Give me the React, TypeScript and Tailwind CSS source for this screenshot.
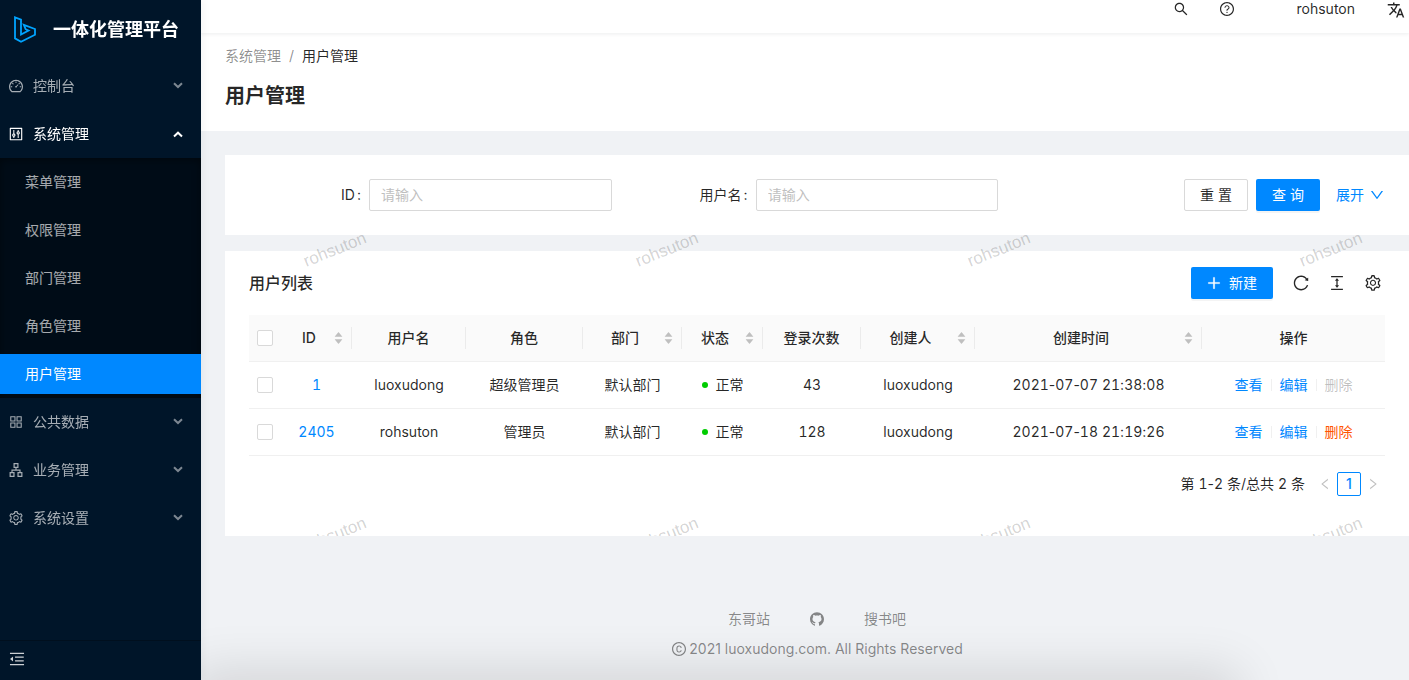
import React from 'react';
import {
  AiFillCaretDown,
  AiFillCaretUp,
  AiOutlineApartment,
  AiOutlineAppstore,
  AiOutlineColumnHeight,
  AiOutlineControl,
  AiOutlineCopyright,
  AiOutlineDashboard,
  AiOutlineDown,
  AiOutlineGithub,
  AiOutlineLeft,
  AiOutlineMenuFold,
  AiOutlinePlus,
  AiOutlineQuestionCircle,
  AiOutlineReload,
  AiOutlineRight,
  AiOutlineSearch,
  AiOutlineSetting,
} from 'react-icons/ai';
import { MdTranslate } from 'react-icons/md';

const subMenus = ['菜单管理', '权限管理', '部门管理', '角色管理', '用户管理'];

const columns = [
  { title: 'ID', width: 71, sorter: true },
  { title: '用户名', width: 114 },
  { title: '角色', width: 117 },
  { title: '部门', width: 99, sorter: true },
  { title: '状态', width: 81, sorter: true },
  { title: '登录次数', width: 98 },
  { title: '创建人', width: 114, sorter: true },
  { title: '创建时间', width: 227, sorter: true },
  { title: '操作', width: 183 },
];

const users = [
  { id: 1, name: 'luoxudong', role: '超级管理员', dept: '默认部门', status: '正常', logins: 43, creator: 'luoxudong', createdAt: '2021-07-07 21:38:08', removable: false },
  { id: 2405, name: 'rohsuton', role: '管理员', dept: '默认部门', status: '正常', logins: 128, creator: 'luoxudong', createdAt: '2021-07-18 21:19:26', removable: true },
];

const Logo: React.FC = () => (
  <svg width="24" height="28" viewBox="0 0 24 28" fill="none" stroke="#00a4ff" strokeWidth="1.8" strokeLinejoin="miter">
    <path d="M2 1.4 L8 3.6 V18.6 L15.6 14.6 L12.6 13.2 L10.8 8.8 L22 13 V18.8 L8 25.8 L2 22.4 Z" />
  </svg>
);

type MenuItemProps = { icon: React.ReactNode; label: string; open?: boolean };

const MenuItem: React.FC<MenuItemProps> = ({ icon, label, open }) => (
  <button
    type="button"
    aria-expanded={!!open}
    className={`my-1 flex h-10 w-full items-center pl-2 pr-[18px] ${open ? 'text-white' : 'text-white/65'}`}
  >
    <span className="text-base">{icon}</span>
    <span className="ml-[9px] flex-1 text-left">{label}</span>
    <svg
      width="10"
      height="8"
      viewBox="0 0 10 8"
      fill="none"
      stroke="currentColor"
      strokeWidth="2"
      className={open ? '' : 'opacity-75'}
    >
      {open ? <path d="M1 6.5 L5 2.7 L9 6.5" /> : <path d="M1 1.2 L5 5 L9 1.2" />}
    </svg>
  </button>
);

const Sidebar: React.FC = () => (
  <aside className="z-10 flex w-[201px] shrink-0 flex-col bg-[#001529] shadow-[2px_0_8px_0_rgba(29,35,41,0.05)]">
    <div className="flex h-[62px] items-center pb-0.5 pl-[13px]">
      <Logo />
      <h1 className="ml-4 text-lg font-semibold text-white">一体化管理平台</h1>
    </div>
    <nav className="flex flex-1 flex-col">
      <MenuItem icon={<AiOutlineDashboard />} label="控制台" />
      <MenuItem icon={<AiOutlineControl />} label="系统管理" open />
      <ul className="bg-[#000c17] shadow-[inset_0_2px_8px_rgba(0,0,0,0.45)]">
        {subMenus.map((name) => (
          <li key={name} className="flex py-1">
            <a
              href="#"
              className={`flex h-10 w-full items-center pl-[25px] ${
                name === '用户管理' ? 'bg-[#0088ff] text-white' : 'text-white/65'
              }`}
            >
              {name}
            </a>
          </li>
        ))}
      </ul>
      <MenuItem icon={<AiOutlineAppstore />} label="公共数据" />
      <MenuItem icon={<AiOutlineApartment />} label="业务管理" />
      <MenuItem icon={<AiOutlineSetting />} label="系统设置" />
    </nav>
    <button type="button" aria-label="收起菜单" className="flex h-10 items-center border-t border-black/25 pb-1 pl-2 text-lg text-white/80">
      <AiOutlineMenuFold />
    </button>
  </aside>
);

const Header: React.FC = () => (
  <header className="z-[1] flex h-[33px] items-start justify-end bg-white pr-1 shadow-[0_1px_4px_rgba(0,21,41,0.08)]">
    <button type="button" aria-label="搜索" className="mt-px mr-[30px] text-base">
      <AiOutlineSearch />
    </button>
    <a href="#" aria-label="帮助" className="mt-px mr-[62px] text-base">
      <AiOutlineQuestionCircle />
    </a>
    <span className="mr-8 leading-[18px]">rohsuton</span>
    <button type="button" aria-label="语言" className="mt-px text-lg">
      <MdTranslate />
    </button>
  </header>
);

const Field: React.FC<{ id: string; label: string }> = ({ id, label }) => (
  <div className="flex items-center">
    <label htmlFor={id} className="w-[120px] shrink-0 pr-2 text-right">
      {label}
      <span className="ml-0.5">:</span>
    </label>
    <input
      id={id}
      type="text"
      placeholder="请输入"
      className="h-8 w-full min-w-0 rounded-xs border border-[#d9d9d9] bg-white px-[11px] pb-0.5 placeholder:text-[#bfbfbf]"
    />
  </div>
);

const SearchForm: React.FC = () => (
  <form className="grid grid-cols-3 gap-6 bg-white p-6">
    <Field id="search-id" label="ID" />
    <Field id="search-name" label="用户名" />
    <div className="flex items-center justify-end gap-2">
      <button type="reset" className="h-8 w-16 rounded-xs border border-[#d9d9d9]">
        重 置
      </button>
      <button type="button" className="h-8 w-16 rounded-xs bg-[#0088ff] text-white shadow-[0_2px_0_rgba(0,0,0,0.045)]">
        查 询
      </button>
      <a href="#" className="ml-2 flex items-center gap-[5px] text-[#0088ff]">
        展开
        <AiOutlineDown className="text-base" />
      </a>
    </div>
  </form>
);

const Sorter: React.FC = () => (
  <span className="flex flex-col text-[11px] text-[#bfbfbf]">
    <AiFillCaretUp />
    <AiFillCaretDown className="-mt-1" />
  </span>
);

const Check: React.FC<{ label: string }> = ({ label }) => (
  <input
    type="checkbox"
    aria-label={label}
    className="block size-4 appearance-none rounded-xs border border-[#d9d9d9] bg-white checked:bg-[#0088ff]"
  />
);

// equal-width digits, while the separators between them keep their own width
const Digits: React.FC<{ text: string }> = ({ text }) => (
  <>
    {text.split(/(\d+)/).map((part, i) => (
      <span key={i} className={i % 2 ? 'tabular-nums' : ''}>
        {part}
      </span>
    ))}
  </>
);

const UserTable: React.FC = () => (
  <table className="w-full table-fixed border-collapse text-center">
    <colgroup>
      <col style={{ width: 32 }} />
      {columns.map((c) => (
        <col key={c.title} style={{ width: c.width }} />
      ))}
    </colgroup>
    <thead>
      <tr className="h-[46px] border-b border-[#f0f0f0] bg-[#fafafa]">
        <th className="p-0 pl-2">
          <Check label="全选" />
        </th>
        {columns.map((c, i) => (
          <th key={c.title} className="p-0 font-medium">
            <div className={`flex h-[22px] items-center ${i < columns.length - 1 ? 'border-r border-black/6' : ''}`}>
              <span className={`flex-1 ${c.sorter ? 'pl-1' : ''}`}>{c.title}</span>
              {c.sorter && (
                <span className="pr-[7px]">
                  <Sorter />
                </span>
              )}
            </div>
          </th>
        ))}
      </tr>
    </thead>
    <tbody>
      {users.map((u) => (
        <tr key={u.id} className="h-[47px] border-b border-[#f0f0f0]">
          <td className="p-0 pl-2">
            <Check label={`选择 ${u.name}`} />
          </td>
          <td className="tabular-nums">
            <a href="#" className="text-[#0088ff]">{u.id}</a>
          </td>
          <td>{u.name}</td>
          <td>{u.role}</td>
          <td>{u.dept}</td>
          <td>
            <div className="flex items-center justify-center gap-2">
              <span className="size-1.5 rounded-full bg-[#00cc00]" />
              {u.status}
            </div>
          </td>
          <td className="tabular-nums">{u.logins}</td>
          <td>{u.creator}</td>
          <td>
            <Digits text={u.createdAt} />
          </td>
          <td>
            <div className="flex items-center justify-center gap-2">
              <a href="#" className="text-[#0088ff]">查看</a>
              <span className="h-3 w-px bg-black/6" />
              <a href="#" className="text-[#0088ff]">编辑</a>
              <span className="h-3 w-px bg-black/6" />
              <button type="button" disabled={!u.removable} className="text-[#ff5500] disabled:text-black/25">
                删除
              </button>
            </div>
          </td>
        </tr>
      ))}
    </tbody>
  </table>
);

const Pagination: React.FC = () => (
  <div className="mt-4 flex items-center justify-end">
    <span className="mr-2">
      <Digits text="第 1-2 条/总共 2 条" />
    </span>
    <button type="button" disabled aria-label="上一页" className="flex size-6 items-center justify-center text-sm text-black/25">
      <AiOutlineLeft />
    </button>
    <button type="button" className="size-6 rounded-xs border border-[#0088ff] font-medium text-[#0088ff]">
      1
    </button>
    <button type="button" disabled aria-label="下一页" className="flex size-6 items-center justify-center text-sm text-black/25">
      <AiOutlineRight />
    </button>
  </div>
);

const Watermark: React.FC = () => (
  <div aria-hidden="true" className="pointer-events-none absolute inset-x-0 -top-3 bottom-0 overflow-hidden">
    {[0, 1].map((row) => (
      <div key={row} className="flex h-[285px] pt-4">
        {[0, 1, 2, 3].map((col) => (
          <div key={col} className="w-[332px] shrink-0 pl-[77px]">
            <span className="inline-block -rotate-[22deg] font-['Liberation_Sans',sans-serif] text-[17px] text-black/18">
              rohsuton
            </span>
          </div>
        ))}
      </div>
    ))}
  </div>
);

const UserList: React.FC = () => (
  <div className="relative pt-4">
    <section className="bg-white px-6 pt-4 pb-10">
      <div className="mb-4 flex h-8 items-center">
        <h2 className="flex-1 text-base font-medium">用户列表</h2>
        <button type="button" className="mr-[19px] flex h-8 items-center gap-[7px] rounded-xs bg-[#0088ff] pr-4 pl-[15px] text-white shadow-[0_2px_0_rgba(0,0,0,0.045)]">
          <AiOutlinePlus className="stroke-[30] text-base" />
          新建
        </button>
        <div className="flex gap-[18px] pr-[3px] text-lg">
          <button type="button" aria-label="刷新">
            <AiOutlineReload />
          </button>
          <button type="button" aria-label="密度">
            <AiOutlineColumnHeight />
          </button>
          <button type="button" aria-label="列设置">
            <AiOutlineSetting />
          </button>
        </div>
      </div>
      <UserTable />
      <Pagination />
    </section>
    <Watermark />
  </div>
);

const Footer: React.FC = () => (
  <footer className="mt-[72px] text-center text-black/45">
    <div className="mb-2 flex items-center justify-center gap-[39px]">
      <a href="#">东哥站</a>
      <a href="#" aria-label="GitHub" className="text-base">
        <AiOutlineGithub />
      </a>
      <a href="#">搜书吧</a>
    </div>
    <div className="flex items-center justify-center gap-0.5">
      <AiOutlineCopyright className="text-base" />
      2021 luoxudong.com. All Rights Reserved
    </div>
  </footer>
);

const App: React.FC = () => {
  return (
    <div className="flex min-h-screen bg-[#f0f2f5] font-['Inter','Noto_Sans_CJK_SC',sans-serif] text-sm leading-[22px] text-black/85">
      <Sidebar />
      <div className="flex min-w-0 flex-1 flex-col">
        <Header />
        <div className="bg-white px-6 pt-3 pb-[18px]">
          <nav className="flex gap-2">
            <a href="#" className="text-black/45">系统管理</a>
            <span className="text-black/45">/</span>
            <span>用户管理</span>
          </nav>
          <h1 className="mt-3 text-xl leading-[34px] font-semibold">用户管理</h1>
        </div>
        <main className="pt-6 pl-6">
          <SearchForm />
          <UserList />
          <Footer />
        </main>
      </div>
      {/* soft shade along the bottom edge of the window */}
      <div className="pointer-events-none fixed top-full right-[180px] left-[201px] h-10 shadow-[0_0_50px_10px_rgba(0,0,0,0.12)]" />
    </div>
  );
};

export default App;
